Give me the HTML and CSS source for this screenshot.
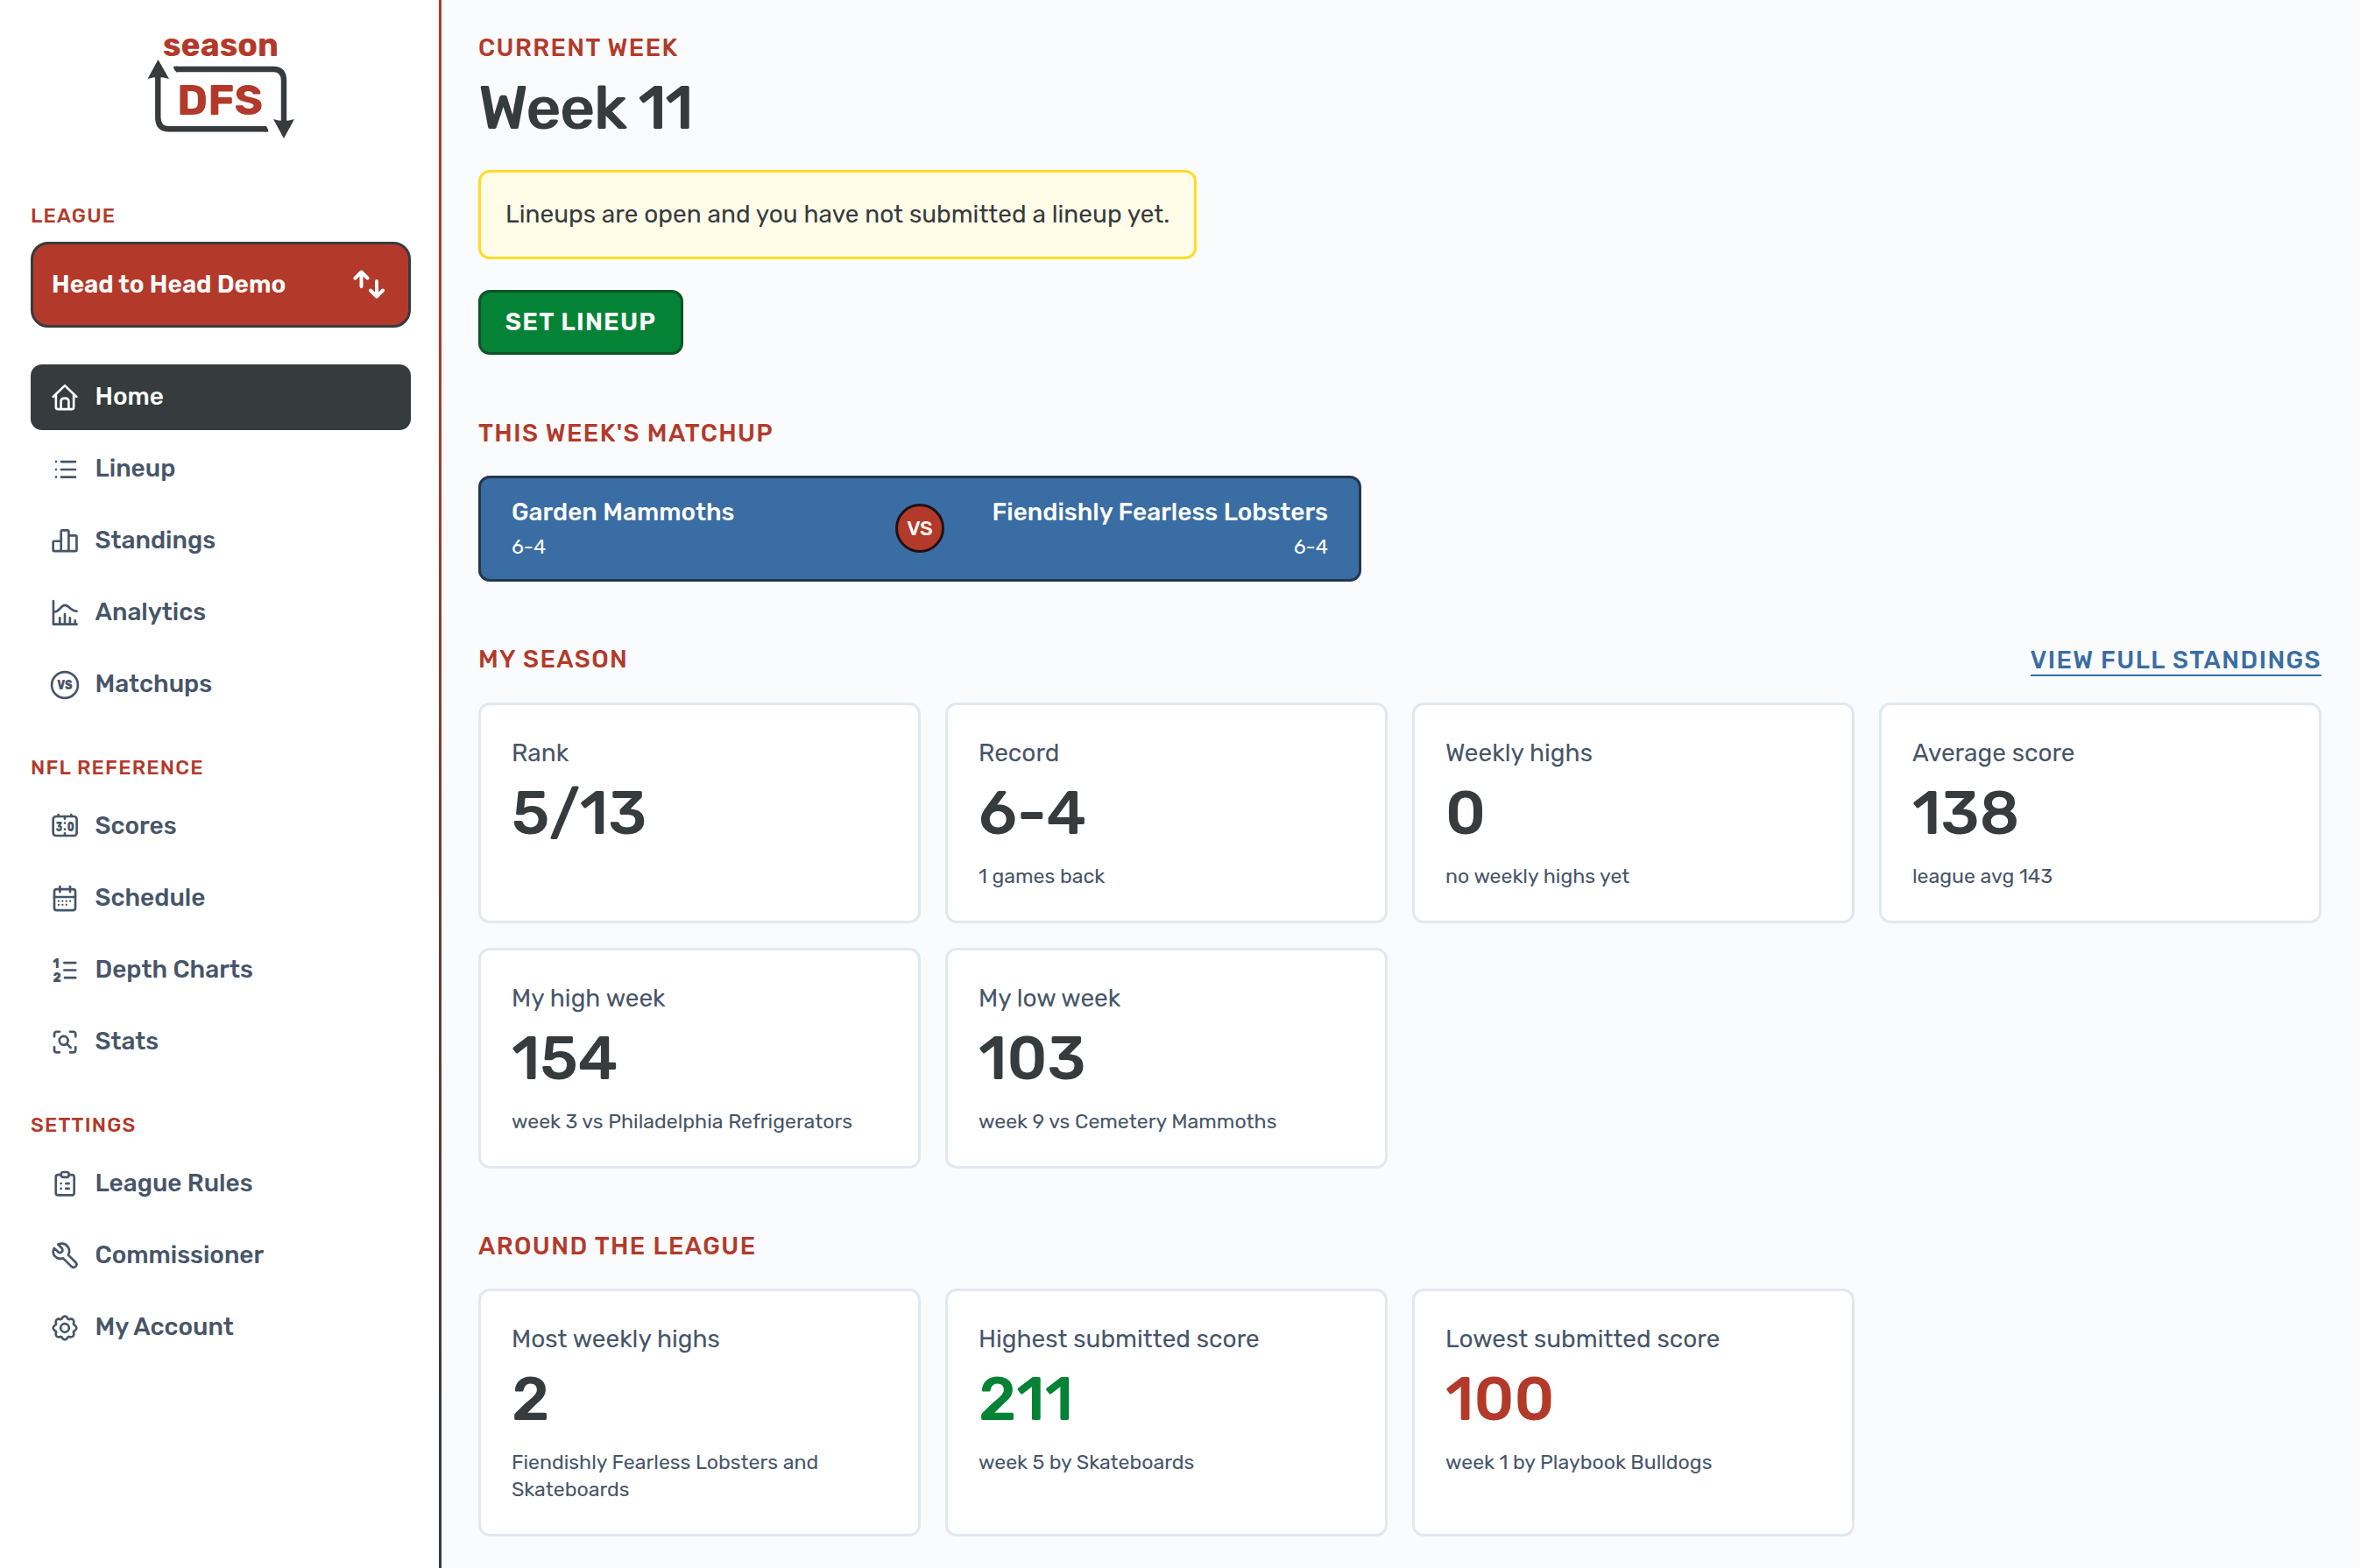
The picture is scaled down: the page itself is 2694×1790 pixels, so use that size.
FILE: index.html
```
<!DOCTYPE html>
<html lang="en">
<head>
    <meta charset="UTF-8">
    <meta name="viewport" content="width=device-width, initial-scale=1.0">
    <title>Season DFS</title>
    <link rel="stylesheet" href="styles.css">
</head>
<body>
    <aside class="sidebar">
        <svg class="logo" viewBox="160 30 180 135">
            <text class="logo-season" x="186" y="64" textLength="132" lengthAdjust="spacingAndGlyphs">season</text>
            <text class="logo-dfs" x="202" y="130.500" textLength="98" lengthAdjust="spacingAndGlyphs">DFS</text>
            <path class="logo-line" d="M201 79H312Q324 79 324 92V139"/>
            <path class="logo-line" d="M304 147.300H193Q180.300 147.300 180.300 134V86"/>
            <path class="logo-head" d="M198 75.800H203V82.200H202Q198.500 81 198 75.800Z"/>
            <path class="logo-head" d="M302 144.100H303Q305.500 145 306.500 150.500H302Z"/>
            <path class="logo-head" d="M180.500 68L193 90Q180.500 86 168.500 90Z"/>
            <path class="logo-head" d="M324 158L336 136Q324 140 312 136Z"/>
        </svg>

        <h3 class="nav-label first">League</h3>
        <button class="league-btn">
            <span>Head to Head Demo</span>
            <svg class="swap-icon" viewBox="0 0 36 34"><path d="M9.500 19V3M2.500 9.500L9.500 2.500L16.500 9.500M27 13V30M20 23.500L27 30.500L34 23.500"/></svg>
        </button>

        <nav class="nav">
            <a class="nav-item active"><svg class="icon" viewBox="0 0 24 24"><path d="M2 11.200L12 1.600L22 11.200M4.400 9.500V20Q4.400 21.800 6.200 21.800H17.800Q19.600 21.800 19.600 20V9.500M8.700 21.500V15Q8.700 12.500 12 12.500Q15.300 12.500 15.300 15V21.500"/></svg>Home</a>
            <a class="nav-item"><svg class="icon" viewBox="0 0 24 24"><path d="M9 5.300H21M9 12H21M9 18.500H21M4.500 5.300h.01M4.500 12h.01M4.500 18.500h.01"/></svg>Lineup</a>
            <a class="nav-item"><svg class="icon" viewBox="0 0 24 24"><path d="M8.800 20.300H3Q2 20.300 2 19.300V12.800Q2 11.800 3 11.800H8.800M8.800 20.300V3.500Q8.800 2.500 9.800 2.500H14.300Q15.300 2.500 15.300 3.500V20.300M15.300 7H21.100Q22.100 7 22.100 8V19.300Q22.100 20.300 21.100 20.300H8.800"/></svg>Standings</a>
            <a class="nav-item"><svg class="icon" viewBox="0 0 24 24"><path d="M2.200 1.600V21.500H22.200M3 10.800C7.500 10.800 8.500 5.200 12 5.200S17 10.300 22.200 10.300M7.700 16V21M12 12.800V21M16.400 16V21M20.800 18.300V21"/></svg>Analytics</a>
            <a class="nav-item"><svg class="icon" viewBox="0 0 24 24"><circle cx="12" cy="12" r="11.200"/><text x="5.500" y="16" textLength="13" lengthAdjust="spacingAndGlyphs" font-size="11.500">VS</text></svg>Matchups</a>
        </nav>

        <h3 class="nav-label">NFL Reference</h3>
        <nav class="nav">
            <a class="nav-item"><svg class="icon" viewBox="0 0 24 24"><rect x="2" y="3" width="20.200" height="16.500" rx="2.500"/><path d="M6.500 1.500V3M17.500 1.500V3M12 3V5M12 8.600V8.700M12 13.900V14M12 17.500V19"/><text x="4.400" y="15.400" textLength="5.600" lengthAdjust="spacingAndGlyphs" font-size="11.500">3</text><text x="14" y="15.400" textLength="6" lengthAdjust="spacingAndGlyphs" font-size="11.500">0</text></svg>Scores</a>
            <a class="nav-item"><svg class="icon" viewBox="0 0 24 24"><rect x="3" y="3.800" width="18" height="18" rx="2"/><path d="M7.800 1.500V6.200M16.500 1.500V6.200M3 10.500H21"/><path class="dots" d="M6.700 14h.01M10 14h.01M13.300 14h.01M16.600 14h.01M6.700 17.200h.01M10 17.200h.01M13.300 17.200h.01"/></svg>Schedule</a>
            <a class="nav-item"><svg class="icon" viewBox="0 0 24 24"><text x="1.700" y="9.900" textLength="5.500" lengthAdjust="spacingAndGlyphs" font-size="11.500">1</text><text x="1.900" y="21.800" textLength="7" lengthAdjust="spacingAndGlyphs" font-size="11.500">2</text><path d="M11.500 5.300H21.200M11.500 11.600H21.200M12 18.100H21.200"/></svg>Depth Charts</a>
            <a class="nav-item"><svg class="icon" viewBox="0 0 24 24"><path d="M3 7V5Q3 2.800 5.200 2.800H7.500M16.500 2.800H19Q21.200 2.800 21.200 5V7M21.200 16V18.300Q21.200 20.500 19 20.500H16.500M7.500 20.500H5.200Q3 20.500 3 18.300V16M13.600 13.100L17 16.500"/><circle cx="11" cy="10.400" r="3.700"/></svg>Stats</a>
        </nav>

        <h3 class="nav-label">Settings</h3>
        <nav class="nav">
            <a class="nav-item"><svg class="icon" viewBox="0 0 24 24"><path d="M8.800 3.900H6.300Q4.300 3.900 4.300 5.900V19.300Q4.300 21.300 6.300 21.300H18Q20 21.300 20 19.300V5.900Q20 3.900 18 3.900H15.500M8.700 11.300h.01M13 11.300H15.500M8.700 15.700h.01M13 15.700H15.500"/><rect x="8.800" y="1.500" width="6.700" height="4.400" rx="2"/></svg>League Rules</a>
            <a class="nav-item"><svg class="icon" viewBox="0 0 24 24"><path d="M6.200 1.900L9.500 5.200Q10.600 6.800 9.600 8.200Q8.200 9.700 6.400 8.500L2.900 5.200Q.8 9.200 3.600 12.200Q6.500 15 10.500 13.800L17.700 20.900Q19.600 22.500 21.300 20.900Q22.900 19.200 21.400 17.400L14.900 11Q16.900 7.500 14.600 4Q11.600 0 6.200 1.900Z"/></svg>Commissioner</a>
            <a class="nav-item"><svg class="icon" viewBox="0 0 24 24"><circle cx="12" cy="12" r="3.600"/><path d="M9.700 3.400Q12 .6 14.300 3.400Q14.830 5.160 16.450 4.290Q20.060 3.940 19.710 7.550Q18.840 9.170 20.600 9.700Q23.400 12 20.600 14.300Q18.840 14.830 19.710 16.450Q20.060 20.060 16.450 19.710Q14.830 18.840 14.300 20.600Q12 23.400 9.700 20.600Q9.170 18.840 7.550 19.710Q3.940 20.060 4.290 16.450Q5.160 14.830 3.400 14.300Q.6 12 3.400 9.700Q5.160 9.170 4.290 7.550Q3.940 3.940 7.550 4.290Q9.170 5.160 9.700 3.400Z"/></svg>My Account</a>
        </nav>
    </aside>

    <main class="main">
        <h2 class="section-title">Current Week</h2>
        <h1>Week 11</h1>
        <div class="alert">Lineups are open and you have not submitted a lineup yet.</div>
        <button class="lineup-btn">Set Lineup</button>

        <h2 class="section-title">This Week's Matchup</h2>
        <div class="matchup">
            <div class="team">
                <div class="team-name">Garden Mammoths</div>
                <div class="team-record">6-4</div>
            </div>
            <div class="versus">VS</div>
            <div class="team away">
                <div class="team-name">Fiendishly Fearless Lobsters</div>
                <div class="team-record">6-4</div>
            </div>
        </div>

        <div class="section-row">
            <h2 class="section-title">My Season</h2>
            <a class="link">View Full Standings</a>
        </div>
        <div class="cards season">
            <div class="card"><h4>Rank</h4><div class="value">5/13</div></div>
            <div class="card"><h4>Record</h4><div class="value">6-4</div><p>1 games back</p></div>
            <div class="card"><h4>Weekly highs</h4><div class="value">0</div><p>no weekly highs yet</p></div>
            <div class="card"><h4>Average score</h4><div class="value">138</div><p>league avg 143</p></div>
            <div class="card"><h4>My high week</h4><div class="value">154</div><p>week 3 vs Philadelphia Refrigerators</p></div>
            <div class="card"><h4>My low week</h4><div class="value">103</div><p>week 9 vs Cemetery Mammoths</p></div>
        </div>

        <h2 class="section-title">Around the League</h2>
        <div class="cards league">
            <div class="card"><h4>Most weekly highs</h4><div class="value">2</div><p>Fiendishly Fearless Lobsters and Skateboards</p></div>
            <div class="card"><h4>Highest submitted score</h4><div class="value high">211</div><p>week 5 by Skateboards</p></div>
            <div class="card"><h4>Lowest submitted score</h4><div class="value low">100</div><p>week 1 by Playbook Bulldogs</p></div>
        </div>
    </main>
</body>
</html>
```
FILE: styles.css
```
* {
    margin: 0;
    padding: 0;
    box-sizing: border-box;
}

body {
    display: flex;
    height: 1790px;
    overflow: hidden;
    background: #f9fbfd;
    color: #363b3d;
    font-family: Rubik, Inter, sans-serif;
    font-size: 28px;
}

h1, h2, h3, h4 {
    font-weight: 500;
}

/* Sidebar */
.sidebar {
    width: 504px;
    flex-shrink: 0;
    padding: 30px 32px 0 35px;
    background: #fff;
    border-right: 3px solid;
    border-image: linear-gradient(#b33a2a 20%, #363b3d 90%) 1;
}

.logo {
    display: block;
    width: 180px;
    height: 135px;
    margin-left: 125px;
}

.logo text {
    fill: #b33a2a;
    font-weight: 700;
}

.logo-season {
    font-size: 37px;
}

.logo-dfs {
    font-size: 49px;
}

.logo-line {
    fill: none;
    stroke: #363b3d;
    stroke-width: 6.4;
}

.logo-head {
    fill: #363b3d;
}

.nav-label {
    height: 87px;
    padding-top: 42px;
    line-height: 30px;
    font-size: 23px;
    letter-spacing: 1.2px;
    text-transform: uppercase;
    color: #b33a2a;
}

.nav-label.first {
    height: 111px;
    padding-top: 66px;
}

.league-btn {
    display: flex;
    justify-content: space-between;
    align-items: center;
    width: 434px;
    height: 98px;
    margin-bottom: 42px;
    padding: 0 27px 1px 21px;
    border: 3px solid #363b3d;
    border-radius: 20px;
    background: #b33a2a;
    color: #fff;
    font: inherit;
    font-weight: 600;
}

.swap-icon {
    width: 36px;
    height: 34px;
    fill: none;
    stroke: #fff;
    stroke-width: 4;
    stroke-linecap: round;
    stroke-linejoin: round;
}

.nav {
    display: flex;
    flex-direction: column;
    gap: 7px;
}

.nav-item {
    display: flex;
    align-items: center;
    gap: 19px;
    height: 75px;
    padding: 0 22px 2px 22.5px;
    border-radius: 13px;
    color: #475569;
    font-weight: 500;
    line-height: 72px;
}

.nav-item.active {
    background: #363b3d;
    color: #fff;
}

.icon {
    width: 32px;
    height: 32px;
    margin-top: 2px;
    overflow: visible;
    fill: none;
    stroke: currentColor;
    stroke-width: 2;
    stroke-linecap: round;
    stroke-linejoin: round;
}

.icon text {
    fill: currentColor;
    stroke: none;
    font-weight: 800;
}

.icon .dots {
    stroke-width: 1.7;
}

/* Main content */
.main {
    flex: 1;
    padding: 37px 44px 0 42px;
}

.section-title {
    height: 36px;
    line-height: 36px;
    letter-spacing: 1.4px;
    font-size: 28px;
    text-transform: uppercase;
    color: #b33a2a;
}

h1 {
    height: 84px;
    margin-top: 9px;
    line-height: 84px;
    font-size: 70px;
    letter-spacing: -1.6px;
}

.alert {
    width: 820px;
    height: 102px;
    margin-top: 28px;
    padding: 0 28px;
    border: 3px solid #ffdc25;
    border-radius: 13px;
    background: #fffce8;
    line-height: 96px;
    white-space: nowrap;
}

.lineup-btn {
    display: block;
    width: 234px;
    height: 74px;
    margin: 35px 0 72px;
    padding-bottom: 2px;
    border: 3px solid #0f5428;
    border-radius: 13px;
    background: #048235;
    color: #fff;
    font: inherit;
    font-weight: 600;
    letter-spacing: 1.2px;
    text-transform: uppercase;
}

.matchup {
    display: grid;
    grid-template-columns: 1fr 56px 1fr;
    align-items: center;
    width: 1008px;
    height: 121px;
    margin: 30px 0 71px;
    padding: 0 35px 1px;
    border: 3px solid #22384e;
    border-radius: 13px;
    background: #396da4;
    color: #fff;
}

.team-name {
    padding-top: 2px;
    line-height: 40px;
    font-weight: 500;
    white-space: nowrap;
}

.team-record {
    line-height: 39px;
    font-size: 23px;
}

.away {
    justify-self: end;
    text-align: right;
}

.versus {
    height: 56px;
    border: 3px solid #1f1113;
    border-radius: 50%;
    background: #b33a2a;
    line-height: 50px;
    text-align: center;
    font-size: 23px;
    font-weight: 500;
}

.section-row {
    display: flex;
    justify-content: space-between;
    height: 36px;
}

.link {
    height: 37px;
    border-bottom: 2px solid #396da4;
    color: #396da4;
    line-height: 37px;
    font-weight: 500;
    letter-spacing: 1.4px;
    text-transform: uppercase;
}

.cards {
    display: grid;
    grid-template-columns: repeat(4, 1fr);
    gap: 28px;
}

.season {
    grid-auto-rows: 252px;
    margin: 31px 0 71px;
}

.league {
    grid-auto-rows: 283px;
    margin-top: 30px;
}

.card {
    padding: 35px;
    border: 3px solid #e2e8f0;
    border-radius: 13px;
    background: #fff;
    color: #475569;
}

.card h4 {
    line-height: 40px;
    font-weight: 400;
}

.value {
    height: 70px;
    margin: 14px 0 21px;
    line-height: 70px;
    font-size: 70px;
    font-weight: 500;
    color: #363b3d;
}

.value.high {
    color: #048235;
}

.value.low {
    color: #b33a2a;
}

.card p {
    font-size: 23.1px;
    line-height: 31px;
}
```
